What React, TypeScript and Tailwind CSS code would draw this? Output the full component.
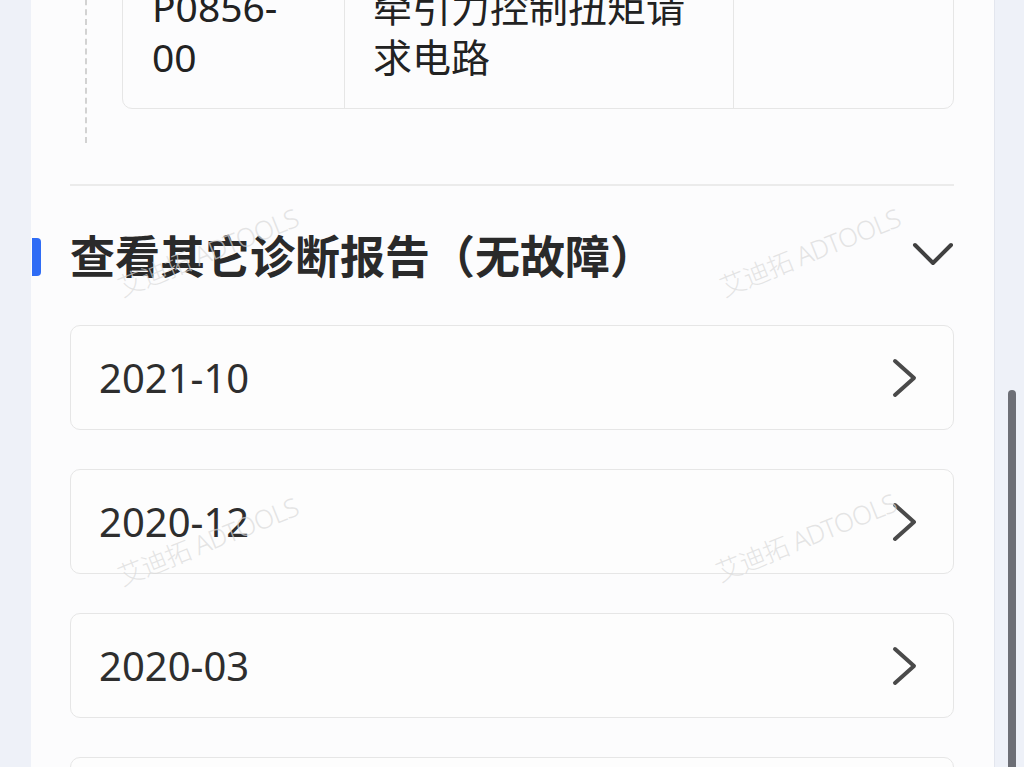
import React from 'react';

const reports = ['2021-10', '2020-12', '2020-03', '2019-08'];

// faint diagonal brand stamps laid over the page
const stamps = [
    { left: 'left-[112px]', top: 'top-[233px]' },
    { left: 'left-[714px]', top: 'top-[233px]' },
    { left: 'left-[112px]', top: 'top-[522px]' },
    { left: 'left-[710px]', top: 'top-[518px]' },
];

function ChevronRight() {
    return (
        <svg width="26" height="40" viewBox="0 0 26 40" fill="none">
            <path d="M3 3 L22 20 L3 37" stroke="#4a4a4a" strokeWidth="4" strokeLinecap="round" strokeLinejoin="round" />
        </svg>
    );
}

function ChevronDown() {
    return (
        <svg width="42" height="24" viewBox="0 0 42 24" fill="none">
            <path d="M3 3 L21 21 L39 3" stroke="#404040" strokeWidth="4" strokeLinecap="round" strokeLinejoin="round" />
        </svg>
    );
}

export default function App() {
    return (
        <div className="relative h-[767px] w-[1024px] overflow-hidden bg-[#eef1f8] font-['Noto_Sans','Noto_Sans_CJK_SC',sans-serif]">
            <div className="ml-[31px] mr-[29px] flex h-full flex-col bg-[#fcfcfd] border-r border-[#e3e6ee] pl-[39px] pr-[40px]">
                {/* fault code timeline */}
                <div className="-mt-[40px] flex shrink-0">
                    <div className="ml-[15px] border-l-2 border-dashed border-[#d2d2d2]" />
                    <div className="ml-[35px] mb-[34px] flex flex-1 rounded-b-[10px] border-[1.5px] border-[#e6e6e6] text-[#222] text-[39px] leading-[50px]">
                        <div className="w-[222px] border-r-[1.5px] border-[#e6e6e6] pl-[29px] pt-[21px] pb-[26px]">
                            <div>P0856-</div>
                            <div>00</div>
                        </div>
                        <div className="w-[389px] border-r-[1.5px] border-[#e6e6e6] pl-[28px] pr-[20px] pt-[21px] pb-[26px]">
                            <div>牵引力控制扭矩请</div>
                            <div>求电路</div>
                        </div>
                        <div className="flex-1" />
                    </div>
                </div>

                <div className="mt-[41px] h-[2px] shrink-0 bg-[#ebebeb]" />

                {/* section header */}
                <div className="mt-[49px] flex h-[44px] shrink-0 items-center">
                    <div className="-ml-[38px] h-[38px] w-[9px] rounded-r-[4px] bg-[#2f6cf5]" />
                    <div className="ml-[29px] flex-1 text-[45px] font-bold leading-[44px] text-[#2a2a2a]">
                        查看其它诊断报告（无故障）
                    </div>
                    <div className="-mt-[6px]">
                        <ChevronDown />
                    </div>
                </div>

                <div className="mt-[46px] flex shrink-0 flex-col gap-[39px]">
                    {reports.map((r) => (
                        <div
                            key={r}
                            className="flex h-[105px] shrink-0 items-center justify-between rounded-[10px] border-[1.5px] border-[#e6e6e6] bg-[#fdfdfd] pl-[28px] pr-[35px]"
                        >
                            <span className="text-[40px] leading-none text-[#2e2e2e]">{r}</span>
                            <ChevronRight />
                        </div>
                    ))}
                </div>
            </div>

            {stamps.map((s, i) => (
                <div
                    key={i}
                    className={`pointer-events-none absolute ${s.left} ${s.top} -rotate-[22deg] whitespace-nowrap text-[26px] font-light tracking-tight text-[#d9d9d9]/70`}
                >
                    艾迪拓 ADTOOLS
                </div>
            ))}

            {/* scroll thumb */}
            <div className="absolute left-[1008px] top-[390px] h-[380px] w-[8px] rounded-full bg-[#6d6f76]" />
        </div>
    );
}
